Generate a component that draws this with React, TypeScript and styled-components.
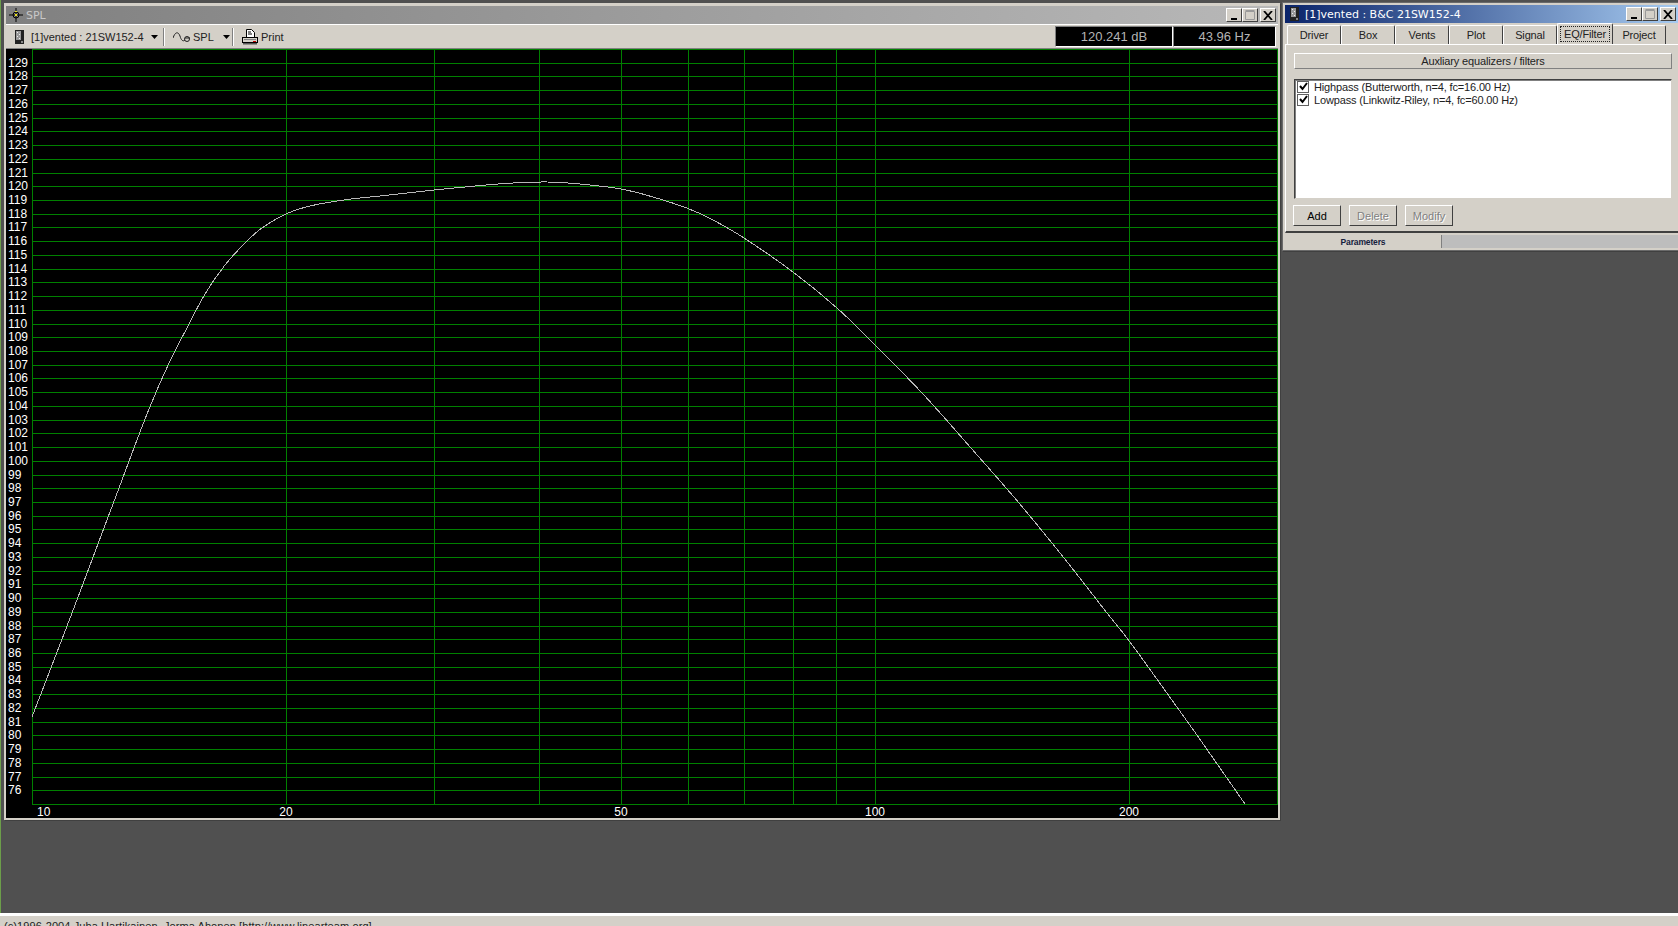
import styled, { createGlobalStyle } from "styled-components";

const GlobalStyle = createGlobalStyle`
  html, body {
    margin: 0;
    height: 926px;
    overflow: hidden;
    background: #505050;
  }
`;

const UI_FONT = `"Liberation Sans", Arial, sans-serif`;
const TITLE_FONT = `"DejaVu Sans", Verdana, sans-serif`;

const dbLevels = Array.from({ length: 56 }, (_, i) => 75 + i);
const freqLines = [10, 20, 30, 40, 50, 60, 70, 80, 90, 100, 200, 300];
const freqLabels = [20, 50, 100, 200];

const yOf = (db: number) => Math.round(804 - (db - 75) * 13.727);
const xOf = (f: number) => Math.floor(32.4 + 843 * Math.log10(f / 10));

const curve = [
  [32, 717], [72, 613], [113, 504], [147, 414], [169, 363], [187, 328],
  [205, 294], [225, 265], [247, 241], [262, 228], [286, 214], [310, 206],
  [347, 199.5], [380, 196], [434, 190], [480, 185.5], [513, 183], [547, 182],
  [580, 184], [621, 189], [653, 197], [688, 208.5], [713, 220], [744, 238],
  [793, 272], [837, 308], [875, 345], [923, 394], [971, 448],
  [1019, 503], [1064, 558], [1107, 613], [1130, 642], [1169, 696],
  [1199, 738], [1245, 804],
];

// catmull-rom through the read-off points, so the trace has no corners
const curvePath = curve.reduce((d, p, i) => {
  if (i === 0) return `M${p[0]} ${p[1]}`;
  const p0 = curve[Math.max(i - 2, 0)];
  const p1 = curve[i - 1];
  const p3 = curve[Math.min(i + 1, curve.length - 1)];
  const c1 = [p1[0] + (p[0] - p0[0]) / 6, p1[1] + (p[1] - p0[1]) / 6];
  const c2 = [p[0] - (p3[0] - p1[0]) / 6, p[1] - (p3[1] - p1[1]) / 6];
  return `${d}C${c1[0]} ${c1[1]} ${c2[0]} ${c2[1]} ${p[0]} ${p[1]}`;
}, "");

function SpeakerIcon() {
  return (
    <svg width="9" height="14" viewBox="0 0 9 14">
      <rect width="9" height="14" fill="#222" />
      <rect x="1" y="1" width="5" height="9" fill="#9a9a9a" />
      <rect x="2" y="2" width="1" height="1" fill="#eee" />
      <rect x="4" y="4" width="1" height="1" fill="#eee" />
      <rect x="2" y="6" width="1" height="1" fill="#eee" />
      <rect x="4" y="8" width="1" height="1" fill="#eee" />
      <rect x="6" y="11" width="2" height="2" fill="#888" />
    </svg>
  );
}

function CrossIcon() {
  return (
    <svg width="14" height="14" viewBox="0 0 14 14">
      <path d="M7 0v14M0 7h14" stroke="#000" fill="none" />
      <circle cx="7" cy="7" r="3" fill="none" stroke="#000" />
      <rect x="6" y="6" width="2" height="2" fill="#e8e020" />
      <rect x="6" y="3" width="2" height="1" fill="#e8e020" />
    </svg>
  );
}

function WaveIcon() {
  return (
    <svg width="17" height="12" viewBox="0 0 17 12">
      <path d="M0 7 C2 1 5 0 7 5 C8 9 10 11 12 9 M12 7h5" stroke="#222" fill="none" />
      <circle cx="14" cy="8" r="2.5" stroke="#222" fill="none" />
    </svg>
  );
}

function PrinterIcon() {
  return (
    <svg width="16" height="16" viewBox="0 0 16 16">
      <path d="M4.5 .5h5l3 3v5h-8z" fill="#fff" stroke="#000" />
      <path d="M6 3h3M6 5h4" stroke="#000" />
      <rect x=".5" y="8.5" width="15" height="5" fill="#d4d0c8" stroke="#000" />
      <rect x="2" y="10" width="12" height="1" fill="#808080" />
      <rect x="11" y="12" width="3" height="1" fill="#c00000" />
      <rect x="1" y="14" width="14" height="1.5" fill="#555" />
    </svg>
  );
}

function Arrow() {
  return (
    <svg width="7" height="4" viewBox="0 0 7 4">
      <path d="M0 0h7L3.5 4z" fill="#000" />
    </svg>
  );
}

function CheckMark() {
  return (
    <svg width="9" height="9" viewBox="0 0 9 9">
      <path d="M1 4l2.5 3L8 1" stroke="#000" strokeWidth="2" fill="none" />
    </svg>
  );
}

function WindowControls() {
  return (
    <Controls>
      <WinButton>
        <svg width="9" height="9" viewBox="0 0 9 9">
          <rect x="1" y="7" width="6" height="2" fill="#000" />
        </svg>
      </WinButton>
      <WinButton>
        <svg width="11" height="10" viewBox="0 0 11 10">
          <path d="M.5 1.5h9v8h-9zM.5 .5h9" fill="none" stroke="#9a9a9a" />
        </svg>
      </WinButton>
      <CloseButton>
        <svg width="10" height="9" viewBox="0 0 10 9">
          <path d="M1 0l8 9M9 0l-8 9" stroke="#000" strokeWidth="1.8" fill="none" />
        </svg>
      </CloseButton>
    </Controls>
  );
}

function Plot() {
  return (
    <PlotSvg viewBox="6 49 1272 769" width="1272" height="769">
      <g shapeRendering="crispEdges" stroke="#008000" strokeWidth="1">
        {dbLevels.map((db) => (
          <line key={db} x1={32} x2={1278} y1={yOf(db) + 0.5} y2={yOf(db) + 0.5} />
        ))}
        {freqLines.map((f) => (
          <line key={f} x1={xOf(f) + 0.5} x2={xOf(f) + 0.5} y1={49} y2={805} />
        ))}
      </g>
      <path d={curvePath} fill="none" stroke="#b8b8b8" strokeWidth="1" shapeRendering="crispEdges" />
      {dbLevels.slice(1, 55).map((db) => (
        <PlotText key={db} x={8} y={yOf(db) + 4}>
          {db}
        </PlotText>
      ))}
      <PlotText x={37} y={816}>
        10
      </PlotText>
      {freqLabels.map((f) => (
        <PlotText key={f} x={xOf(f)} y={816} textAnchor="middle">
          {f}
        </PlotText>
      ))}
    </PlotSvg>
  );
}

export default function App() {
  return (
    <>
      <GlobalStyle />
      <Screen>
        <Desktop>
          <SplWindow>
            <TitleBar $active={false}>
              <CrossIcon />
              <TitleText $active={false}>SPL</TitleText>
              <WindowControls />
            </TitleBar>
            <Toolbar>
              <ToolItem $width={148} $gap={7}>
                <SpeakerIcon />
                <span>[1]vented : 21SW152-4</span>
                <ArrowSlot $left={0}>
                  <Arrow />
                </ArrowSlot>
              </ToolItem>
              <ToolSep />
              <ToolItem $width={59} $gap={3}>
                <WaveIcon />
                <span>SPL</span>
                <ArrowSlot $left={6}>
                  <Arrow />
                </ArrowSlot>
              </ToolItem>
              <ToolSep />
              <ToolItem $width={60} $gap={3}>
                <PrinterIcon />
                <span>Print</span>
              </ToolItem>
              <Readouts>
                <Readout $width={118}>120.241 dB</Readout>
                <Readout $width={103}>43.96 Hz</Readout>
              </Readouts>
            </Toolbar>
            <Plot />
          </SplWindow>

          <SideWindow>
            <TitleBar $active>
              <SpeakerIcon />
              <TitleText $active>[1]vented : B&amp;C 21SW152-4</TitleText>
              <WindowControls />
            </TitleBar>
            <Tabs>
              <Tab>Driver</Tab>
              <Tab>Box</Tab>
              <Tab>Vents</Tab>
              <Tab>Plot</Tab>
              <Tab>Signal</Tab>
              <ActiveTab>
                <span>EQ/Filter</span>
              </ActiveTab>
              <Tab>Project</Tab>
            </Tabs>
            <Panel>
              <HeaderButton>Auxliary equalizers / filters</HeaderButton>
              <ListBox>
                <ListRow>
                  <CheckBox>
                    <CheckMark />
                  </CheckBox>
                  Highpass (Butterworth, n=4, fc=16.00 Hz)
                </ListRow>
                <ListRow>
                  <CheckBox>
                    <CheckMark />
                  </CheckBox>
                  Lowpass (Linkwitz-Riley, n=4, fc=60.00 Hz)
                </ListRow>
              </ListBox>
              <ButtonRow>
                <PushButton>Add</PushButton>
                <PushButton disabled>Delete</PushButton>
                <PushButton disabled>Modify</PushButton>
              </ButtonRow>
            </Panel>
            <BottomTabs>
              <BottomTab>Parameters</BottomTab>
            </BottomTabs>
          </SideWindow>
        </Desktop>
        <StatusBar>(c)1996-2004 Juha Hartikainen, Jorma Ahonen [http://www.linearteam.org]</StatusBar>
      </Screen>
    </>
  );
}

const Screen = styled.div`
  width: 1678px;
  height: 926px;
  display: flex;
  flex-direction: column;
  overflow: hidden;
  background: #505050;
  font-family: ${UI_FONT};
  font-size: 11px;
  letter-spacing: -0.15px;
  color: #000;
`;

const Desktop = styled.div`
  flex: 1;
  display: flex;
  align-items: flex-start;
  gap: 3px;
  padding: 3px 0 0 3px;
  border-left: 1px solid #6c9e4a;
  min-height: 0;
`;

const SplWindow = styled.div`
  flex: none;
  width: 1272px;
  border: 2px solid #d4d0c8;
  border-top-width: 3px;
  box-shadow: 1px 1px 0 #404040;
  background: #000;
`;

const SideWindow = styled.div`
  flex: none;
  width: 393px;
  border: 2px solid #d4d0c8;
  border-right: 0;
  box-shadow: 0 2px 0 #404040;
  background: #d4d0c8;
  outline: 1px solid #6a6a6a;
`;

const TitleBar = styled.div<{ $active: boolean }>`
  height: 18px;
  display: flex;
  align-items: center;
  gap: ${(p) => (p.$active ? 6 : 3)}px;
  padding: 0 2px 0 ${(p) => (p.$active ? 5 : 3)}px;
  background: ${(p) =>
    p.$active
      ? "linear-gradient(90deg, #0a246a, #a6caf0)"
      : "linear-gradient(90deg, #808080, #b8b8b8)"};
`;

const TitleText = styled.div<{ $active: boolean }>`
  flex: 1;
  padding-top: 1px;
  font-family: ${TITLE_FONT};
  font-size: 11px;
  letter-spacing: 0;
  color: ${(p) => (p.$active ? "#fff" : "#c8c8c8")};
`;

const Controls = styled.div`
  display: flex;
  align-items: center;
`;

const WinButton = styled.div`
  box-sizing: border-box;
  width: 16px;
  height: 14px;
  display: flex;
  align-items: center;
  justify-content: center;
  background: #d4d0c8;
  border: 1px solid;
  border-color: #fff #404040 #404040 #fff;
`;

const CloseButton = styled(WinButton)`
  margin-left: 2px;
`;

const Toolbar = styled.div`
  box-sizing: border-box;
  height: 25px;
  display: flex;
  align-items: center;
  padding: 0 2px 0 9px;
  background: #d4d0c8;
  border-top: 1px solid #fff;
  border-bottom: 1px solid #808080;
  letter-spacing: 0;
`;

const ToolItem = styled.div<{ $width: number; $gap: number }>`
  flex: none;
  width: ${(p) => p.$width}px;
  display: flex;
  align-items: center;
  gap: ${(p) => p.$gap}px;
  color: #222;
  white-space: nowrap;
`;

const ArrowSlot = styled.span<{ $left: number }>`
  display: flex;
  margin-left: ${(p) => p.$left}px;
`;

const ToolSep = styled.div`
  flex: none;
  width: 1px;
  height: 18px;
  margin-right: 9px;
  background: #808080;
  box-shadow: 1px 0 0 #fff;
`;

const Readouts = styled.div`
  margin-left: auto;
  display: flex;
`;

const Readout = styled.div<{ $width: number }>`
  box-sizing: border-box;
  width: ${(p) => p.$width}px;
  height: 21px;
  display: flex;
  align-items: center;
  justify-content: center;
  background: #000;
  color: #b4b4b4;
  font-size: 13px;
  border: 1px solid;
  border-color: #808080 #fff #fff #808080;
`;

const PlotSvg = styled.svg`
  display: block;
  background: #000;
`;

const PlotText = styled.text`
  fill: #fff;
  font-family: ${UI_FONT};
  font-size: 12px;
  letter-spacing: 0;
`;

const Tabs = styled.div`
  height: 21px;
  display: flex;
  align-items: flex-end;
  padding-left: 2px;
`;

const Tab = styled.div`
  box-sizing: border-box;
  width: 54px;
  height: 19px;
  display: flex;
  align-items: center;
  justify-content: center;
  color: #222;
  background: #d4d0c8;
  border: 1px solid;
  border-color: #fff #404040 transparent #fff;
  border-bottom: 0;
  border-radius: 2px 2px 0 0;
`;

const ActiveTab = styled(Tab)`
  width: 56px;
  height: 21px;
  margin-right: -1px;
  z-index: 1;

  span {
    padding: 1px 3px;
    outline: 1px dotted #222;
  }
`;

const Panel = styled.div`
  box-sizing: border-box;
  height: 189px;
  display: flex;
  flex-direction: column;
  padding: 8px 6px 0 8px;
  border-top: 1px solid #fff;
  border-left: 1px solid #fff;
  border-bottom: 2px solid #404040;
`;

const HeaderButton = styled.div`
  box-sizing: border-box;
  height: 16px;
  display: flex;
  align-items: center;
  justify-content: center;
  color: #222;
  border: 1px solid;
  border-color: #fff #808080 #808080 #fff;
`;

const ListBox = styled.div`
  box-sizing: border-box;
  height: 120px;
  margin-top: 10px;
  padding: 0 2px;
  background: #fff;
  border: 1px solid;
  border-color: #404040 #d4d0c8 #d4d0c8 #404040;
  box-shadow: inset 1px 1px 0 #808080;
`;

const ListRow = styled.div`
  height: 13px;
  display: flex;
  align-items: center;
  gap: 5px;
  color: #222;
  white-space: nowrap;
`;

const CheckBox = styled.div`
  box-sizing: border-box;
  flex: none;
  width: 12px;
  height: 12px;
  display: flex;
  align-items: center;
  justify-content: center;
  background: #fff;
  border: 1px solid #606060;
`;

const ButtonRow = styled.div`
  display: flex;
  gap: 8px;
  margin: 6px 0 0 -1px;
`;

const PushButton = styled.button`
  box-sizing: border-box;
  width: 48px;
  height: 21px;
  padding: 0;
  font: inherit;
  color: #000;
  background: #d4d0c8;
  border: 1px solid;
  border-color: #fff #404040 #404040 #fff;

  &:disabled {
    color: #808080;
    text-shadow: 1px 1px 0 #fff;
  }
`;

const BottomTabs = styled.div`
  height: 13px;
  margin-top: 2px;
  display: flex;
  background: #bdbdbd;
`;

const BottomTab = styled.div`
  width: 156px;
  display: flex;
  align-items: center;
  justify-content: center;
  font-size: 8.5px;
  font-weight: bold;
  color: #14213d;
  background: #d4d0c8;
  border-right: 1px solid #808080;
`;

const StatusBar = styled.div`
  flex: none;
  box-sizing: border-box;
  height: 13px;
  padding: 4px 0 0 4px;
  overflow: hidden;
  color: #222;
  letter-spacing: 0.09px;
  white-space: nowrap;
  background: #d4d0c8;
  border-top: 3px solid #fff;
`;
